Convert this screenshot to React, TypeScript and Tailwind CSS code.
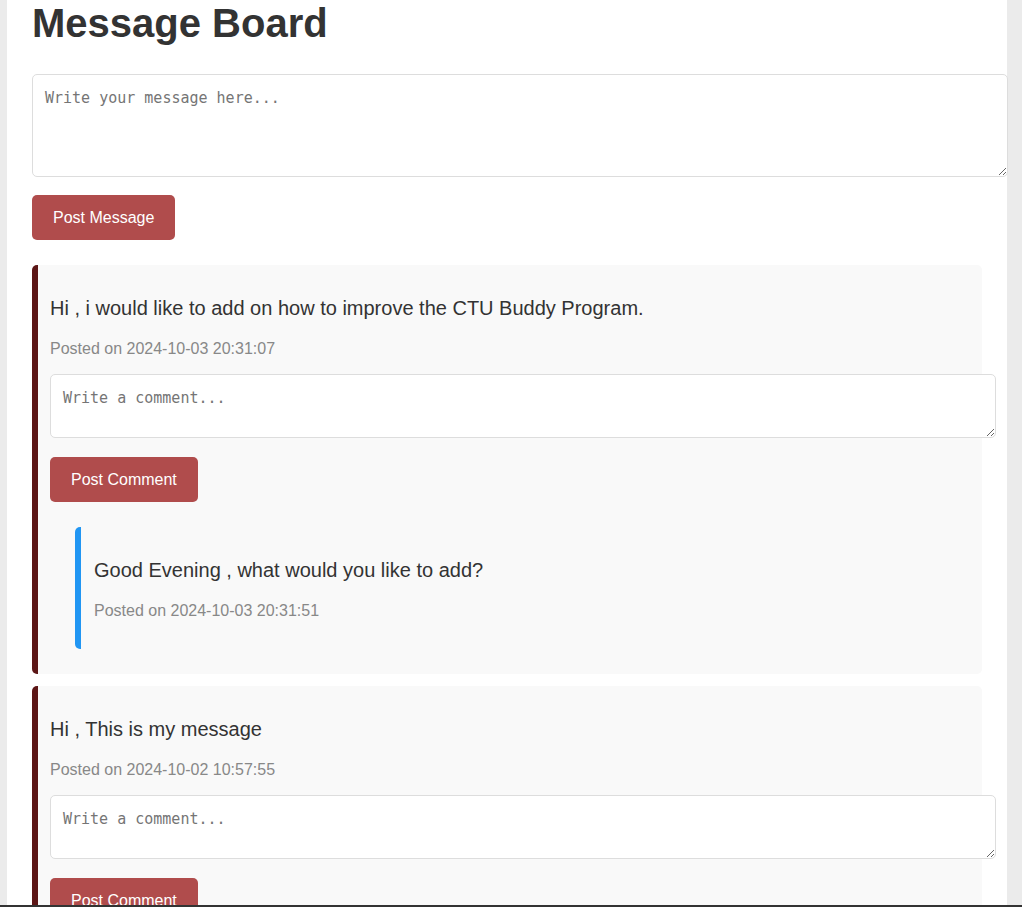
import React from "react";

type Reply = { text: string; posted: string };
type Message = { text: string; posted: string; replies: Reply[] };

const messages: Message[] = [
  {
    text: "Hi , i would like to add on how to improve the CTU Buddy Program.",
    posted: "2024-10-03 20:31:07",
    replies: [
      { text: "Good Evening , what would you like to add?", posted: "2024-10-03 20:31:51" },
    ],
  },
  {
    text: "Hi , This is my message",
    posted: "2024-10-02 10:57:55",
    replies: [],
  },
];

const areaCls =
  "block w-[calc(100%+26px)] border border-[#dddddd] rounded-[5px] bg-white px-3 pt-[13px] pb-[11px] text-[15px] leading-[20px] font-['DejaVu_Sans_Mono','Liberation_Mono',monospace] placeholder:text-[#757575]";

const btnCls =
  "h-[45px] px-[21px] bg-[#b04c4c] text-white text-[16px] rounded-[5px] cursor-pointer";

const MessageCard: React.FC<{ msg: Message; first: boolean }> = ({ msg, first }) => {
  return (
    <div
      className={`bg-[#f9f9f9] border-l-[6px] border-[#5c1616] rounded-[5px] px-3 pt-3 pb-[25px] ${
        first ? "" : "mt-3"
      }`}
    >
      <p className="mt-5 text-[20px] leading-[23px]">{msg.text}</p>
      <p className="mt-5 text-[16px] leading-[18px] text-[#888888]">Posted on {msg.posted}</p>
      <textarea className={`${areaCls} mt-[16px] h-[64px]`} placeholder="Write a comment..." />
      <button className={`${btnCls} mt-[19px]`}>Post Comment</button>
      {msg.replies.map((r, i) => (
        <div
          key={i}
          className="mt-[25px] ml-[25px] border-l-[6px] border-[#2196f3] rounded-[5px] pl-[13px] pt-3 pb-[29px]"
        >
          <p className="mt-5 text-[20px] leading-[23px]">{r.text}</p>
          <p className="mt-5 text-[16px] leading-[18px] text-[#888888]">Posted on {r.posted}</p>
        </div>
      ))}
    </div>
  );
};

export default function App() {
  return (
    <div className="min-h-screen bg-[#ebebeb] pl-[7px] text-[#333333] font-['Liberation_Sans',Arial,sans-serif]">
      <div className="w-[1000px] min-h-screen bg-white px-[25px] pb-10">
        <h1 className="text-[40px] leading-[46px] font-bold">Message Board</h1>
        <textarea className={`${areaCls} mt-[28px] h-[103px]`} placeholder="Write your message here..." />
        <button className={`${btnCls} mt-[18px]`}>Post Message</button>
        <div className="mt-[25px]">
          {messages.map((m, i) => (
            <MessageCard key={i} msg={m} first={i === 0} />
          ))}
        </div>
      </div>
      <div className="fixed bottom-0 left-0 right-0 h-[2px] bg-[#333333]" />
    </div>
  );
}
